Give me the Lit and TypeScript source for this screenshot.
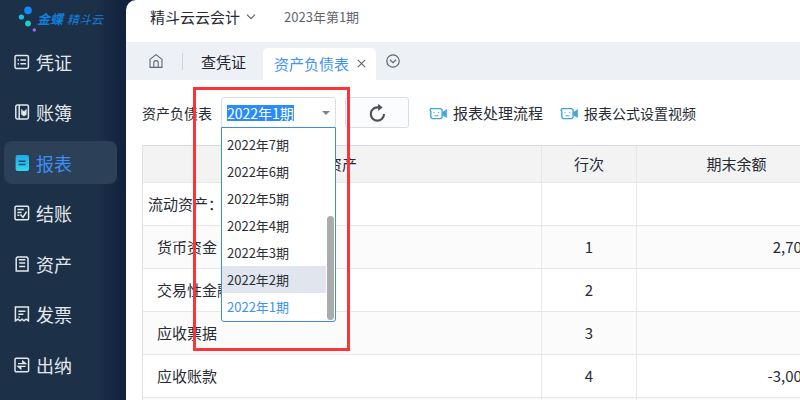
import { LitElement, html, css, svg, nothing, type SVGTemplateResult } from "lit";
import { customElement, query, state } from "lit/decorators.js";
import { classMap } from "lit/directives/class-map.js";

interface NavItem {
  label: string;
  icon: SVGTemplateResult;
}

const NAV: NavItem[] = [
  {
    label: "凭证",
    icon: svg`<rect x="1" y="1.5" width="13.4" height="13" rx="1.4"/><path d="M3.6 6h1.4M6.4 6h5.6M3.6 9.8h1.4M6.4 9.8h5.6"/>`,
  },
  {
    label: "账簿",
    icon: svg`<rect x="1.8" y="1" width="12.6" height="14" rx="1.4"/><path d="M5.2 1v14"/><path d="M7.4 5.2v5.2l2.6 1.8 2.4-1.8V5.2l-2.4 2.4z" fill="currentColor" stroke-width=".4"/>`,
  },
  {
    label: "报表",
    icon: svg`<defs><linearGradient id="g" x1="0" y1="0" x2="0" y2="1"><stop offset="0" stop-color="#1fa9e8"/><stop offset="1" stop-color="#30d8ee"/></linearGradient></defs><rect x="1.6" y="0" width="13.4" height="16" rx="2" fill="url(#g)" stroke="none"/><path d="M4.6 6.2h7M4.6 9.4h7" stroke="#1b4a68"/>`,
  },
  {
    label: "结账",
    icon: svg`<rect x="1" y="1.2" width="13.6" height="13.6" rx="1.2"/><path d="M3.4 4.6h6.4M3.4 7.4h4.2M3.4 10.2h2M6.4 9.4l2.6 2.8 3.6-5.6"/>`,
  },
  {
    label: "资产",
    icon: svg`<path d="M3.4 1h9.4l1.2 1.4V15H2.2V2.4z"/><path d="M4.8 3.8h6.6M5.2 7h6M5.2 10.4h6"/>`,
  },
  {
    label: "发票",
    icon: svg`<path d="M1.4 1h13v13.8l-2.4-1.6-2 1.6-2-1.6-2 1.6-2-1.6-2.6 1.6z"/><path d="M4.4 5.2h7M4.4 8.2h5M4.4 11h1.4"/>`,
  },
  {
    label: "出纳",
    icon: svg`<rect x="1" y="1.2" width="13.6" height="13.6" rx="1.4"/><path d="M4 6.6h7.6L8.8 4.2v2.4M11.6 9.4H4l2.8 2.4V9.4" stroke-width="1.3"/>`,
  },
];

const PERIODS = [7, 6, 5, 4, 3, 2, 1].map((n) => `2022年${n}期`);

interface Row {
  name: string;
  line?: number;
  end?: string;
  group?: boolean;
}

const ROWS: Row[] = [
  { name: "流动资产：", group: true },
  { name: "货币资金", line: 1, end: "2,700.00" },
  { name: "交易性金融资产", line: 2 },
  { name: "应收票据", line: 3 },
  { name: "应收账款", line: 4, end: "-3,000.00" },
  { name: "" },
];

@customElement("period-picker")
export class PeriodPicker extends LitElement {
  @state() private value = "2022年1期";
  @state() private hovered = "2022年2期";
  @query("input") private field!: HTMLInputElement;

  static styles = css`
    :host {
      display: block;
      position: relative;
      width: 115px;
    }
    .box {
      display: flex;
      align-items: center;
      box-sizing: border-box;
      height: 31px;
      padding: 0 5px;
      border: 1px solid #d9dde4;
      border-radius: 3px;
      background: #fff;
    }
    input {
      flex: 1;
      min-width: 0;
      height: 16px;
      padding: 0;
      border: 0;
      outline: 0;
      font: inherit;
      font-size: 14px;
      line-height: 16px;
      color: #262b33;
      background: none;
    }
    input::selection {
      color: #fff;
      background: #2a8bfa;
    }
    .arrow {
      border: 4px solid transparent;
      border-top-color: #7c828a;
      border-bottom: 0;
    }
    .menu {
      position: absolute;
      z-index: 2;
      top: 30px;
      left: 0;
      right: 0;
      display: flex;
      border: 1px solid #3b8de6;
      border-radius: 0 0 3px 3px;
      background: #fff;
    }
    ul {
      flex: 1;
      margin: 0;
      padding: 3px 0 1px;
      list-style: none;
    }
    li {
      height: 27px;
      padding-left: 5px;
      font-size: 13px;
      line-height: 27px;
      color: #2b2f36;
    }
    .hovered {
      background: #e1e5ee;
    }
    .chosen {
      color: #3b93fb;
    }
    .track {
      display: flex;
      align-items: flex-end;
      padding: 0 1px 1px;
    }
    .thumb {
      width: 7px;
      height: 104px;
      border-radius: 4px;
      background: #ababab;
    }
    .mark {
      position: absolute;
      z-index: 3;
      inset: -10px -14px -223px -28px;
      border: 3px solid #fb3438;
      pointer-events: none;
    }
  `;

  protected firstUpdated() {
    this.field.focus();
    this.field.select();
  }

  render() {
    return html`
      <div class="box">
        <input
          role="combobox"
          aria-label="资产负债表"
          aria-expanded="true"
          aria-controls="periods"
          .value=${this.value}
        />
        <span class="arrow"></span>
      </div>
      <div class="menu">
        <ul id="periods" role="listbox" aria-label="会计期间">
          ${PERIODS.map(
            (p) => html`<li
              role="option"
              aria-selected=${p === this.value}
              class=${classMap({ hovered: p === this.hovered, chosen: p === this.value })}
              @click=${() => (this.value = p)}
              @mouseenter=${() => (this.hovered = p)}
            >${p}</li>`
          )}
        </ul>
        <div class="track"><div class="thumb"></div></div>
      </div>
      <div class="mark"></div>
    `;
  }
}

@customElement("app-root")
export class AppRoot extends LitElement {
  static styles = css`
    :host {
      display: grid;
      grid-template-columns: 126px minmax(0, 1fr);
      height: 100vh;
      overflow: hidden;
      font-family: "Noto Sans CJK SC", "Noto Sans", sans-serif;
      color: #262b33;
      background: linear-gradient(90deg, #1c3047 0, #1c3047 96px, #12213d 126px);
    }
    svg {
      display: block;
      flex: none;
      fill: none;
      stroke: currentColor;
    }
    a {
      color: inherit;
      text-decoration: none;
    }
    button {
      padding: 0;
      border: 0;
      background: none;
      font: inherit;
      color: inherit;
    }

    .brand {
      display: flex;
      align-items: center;
      height: 36px;
      padding-left: 18px;
      gap: 1px;
      color: #127fdb;
      font-style: italic;
      font-size: 12px;
      white-space: nowrap;
    }
    .brand strong {
      font-size: 13px;
      margin-right: 3px;
    }
    nav {
      display: grid;
      align-content: space-between;
      min-height: 346px;
      margin: 4px 9px 0 4px;
    }
    .item {
      display: flex;
      align-items: center;
      gap: 6px;
      height: 43px;
      padding-left: 10px;
      border-radius: 8px;
      font-size: 18px;
      line-height: 24px;
      color: #e4e8ec;
    }
    .item svg {
      stroke-width: 1.5;
    }
    .item.active {
      color: #3b8ff5;
      background: #2c4058;
    }

    main {
      min-width: 0;
      overflow: hidden;
      border-radius: 10px 0 0 0;
      background: #fff;
    }
    header {
      display: flex;
      align-items: flex-start;
      height: 42px;
      padding: 0 24px;
      box-sizing: border-box;
      line-height: 34px;
    }
    .company {
      display: flex;
      align-items: center;
      gap: 6px;
      font-size: 15px;
      line-height: 34px;
    }
    .company svg {
      color: #5d6673;
    }
    .period {
      margin-left: 28px;
      font-size: 13px;
      color: #5f6670;
    }
    .tabs {
      display: flex;
      align-items: center;
      height: 38px;
      padding-left: 23px;
      font-size: 15px;
      background: #edf1f5;
      color: #5d6673;
    }
    .rule {
      width: 1px;
      height: 17px;
      margin: 0 18px 0 19px;
      background: #ccd2d9;
    }
    .tab {
      color: #1f252e;
    }
    .current {
      display: flex;
      align-items: center;
      align-self: flex-end;
      gap: 8px;
      box-sizing: border-box;
      height: 32px;
      margin: 0 10px 0 17px;
      padding: 0 10px 2px 11px;
      border-radius: 5px 5px 0 0;
      background: #fff;
    }
    .current .tab {
      color: #3d93fb;
    }

    .tools {
      display: flex;
      align-items: center;
      padding: 17px 16px;
      font-size: 14px;
      white-space: nowrap;
    }
    .tools label {
      width: 79px;
    }
    .refresh {
      display: grid;
      place-items: center;
      box-sizing: border-box;
      width: 64px;
      height: 31px;
      margin: 0 20px 0 9px;
      border: 1px solid #d9dde6;
      border-radius: 3px;
      background: #fbfcfe;
      color: #4c4f55;
    }
    .video {
      display: flex;
      align-items: center;
      gap: 5px;
      margin-right: 17px;
    }
    .video.large {
      font-size: 15px;
    }
    .video svg {
      color: #43a5dc;
    }

    .sheet {
      padding-left: 16px;
    }
    table {
      width: calc(100% + 37px);
      table-layout: fixed;
      border-collapse: separate;
      border-spacing: 0;
      border-left: 1px solid #dfe2e8;
      font-size: 15px;
    }
    .line {
      width: 95px;
    }
    .amount {
      width: 200px;
    }
    th,
    td {
      box-sizing: border-box;
      height: 43px;
      padding: 0 5px;
      border-right: 1px solid #e6e7ea;
      border-bottom: 1px solid #e6e7ea;
      text-align: center;
      font-weight: 400;
      line-height: 20px;
      white-space: nowrap;
    }
    th {
      height: 38px;
      border-top: 1px solid #d6d9e0;
      background: #f3f3f4;
    }
    tbody tr:nth-child(even) {
      background: #fbfbfb;
    }
    .name {
      padding-left: 14px;
      text-align: left;
    }
    .group {
      padding-left: 5px;
    }
    .sum {
      text-align: right;
    }
  `;

  private video(label: string, large = false) {
    return html`<a class=${classMap({ video: true, large })} href="#">
      <svg width="19" height="16" viewBox="0 0 19 16" stroke-width="1.4">
        <path d="M3.6 3.6h8.2l1.3 1.4v7l-1.2 1.6H3.2L1.8 12V6.4L1 5l1-1.4z" />
        <path d="M4.4 7.6h1.2M9 7.6h1.2M5.4 10.8h4" stroke-width="1" />
        <path d="M13.6 7.2l4-2.8v8l-4-2.2z" fill="currentColor" stroke-width=".6" />
      </svg>
      ${label}
    </a>`;
  }

  render() {
    return html`
      <aside>
        <div class="brand">
          <svg width="18" height="32" viewBox="0 0 18 32">
            <g stroke="none">
              <circle cx="10" cy="8.4" r="3.8" fill="#1288fb" />
              <circle cx="3.4" cy="15" r="2.6" fill="#17c3ee" />
              <circle cx="10" cy="21.5" r="2.9" fill="#1fcfc6" />
              <circle cx="16.3" cy="28" r="1.7" fill="#a566e8" />
            </g>
          </svg>
          <strong>金蝶</strong>精斗云
        </div>
        <nav>
          ${NAV.map(
            (n) => html`<a href="#" class=${classMap({ item: true, active: n.label === "报表" })}>
              <svg width="16" height="16" viewBox="0 0 16 16">${n.icon}</svg>${n.label}
            </a>`
          )}
        </nav>
      </aside>
      <main>
        <header>
          <button class="company">
            精斗云云会计
            <svg width="10" height="8" viewBox="0 0 10 8" stroke-width="1.2">
              <path d="M1 1.6l4 4 4-4" />
            </svg>
          </button>
          <span class="period">2023年第1期</span>
        </header>
        <div class="tabs">
          <button aria-label="首页">
            <svg width="14" height="16" viewBox="0 0 14 16" stroke-width="1.1">
              <path d="M1 6.4L7 1.6l6 4.8v8H1z" stroke-linejoin="round" />
              <path d="M4.8 14.2V9.8a2.2 2.2 0 0 1 4.4 0v4.4" />
            </svg>
          </button>
          <span class="rule"></span>
          <button class="tab">查凭证</button>
          <div class="current">
            <button class="tab">资产负债表</button>
            <button aria-label="关闭">
              <svg width="9" height="9" viewBox="0 0 9 9" stroke-width="1.1">
                <path d="M.8.8l7.4 7.4M8.2.8L.8 8.2" />
              </svg>
            </button>
          </div>
          <button aria-label="更多">
            <svg width="14" height="14" viewBox="0 0 14 14" stroke-width="1.2">
              <circle cx="7" cy="7" r="6.2" />
              <path d="M4 5.8l3 2.8 3-2.8" />
            </svg>
          </button>
        </div>
        <div class="tools">
          <label>资产负债表</label>
          <period-picker></period-picker>
          <button class="refresh" aria-label="刷新">
            <svg width="18" height="20" viewBox="0 0 18 20" stroke-width="2.1">
              <path d="M11.4 4.4H9.4A6.6 6.6 0 1 0 16 11" />
              <path d="M10.2 .8l4.4 3.6-4.4 3.6z" fill="currentColor" stroke="none" />
            </svg>
          </button>
          ${this.video("报表处理流程", true)} ${this.video("报表公式设置视频")}
        </div>
        <div class="sheet">
          <table>
            <thead>
              <tr>
                <th>资产</th>
                <th class="line">行次</th>
                <th class="amount">期末余额</th>
              </tr>
            </thead>
            <tbody>
              ${ROWS.map(
                (r) => html`<tr>
                  <td class=${classMap({ name: true, group: !!r.group })}>${r.name}</td>
                  <td>${r.line ?? nothing}</td>
                  <td class="sum">${r.end ?? nothing}</td>
                </tr>`
              )}
            </tbody>
          </table>
        </div>
      </main>
    `;
  }
}
